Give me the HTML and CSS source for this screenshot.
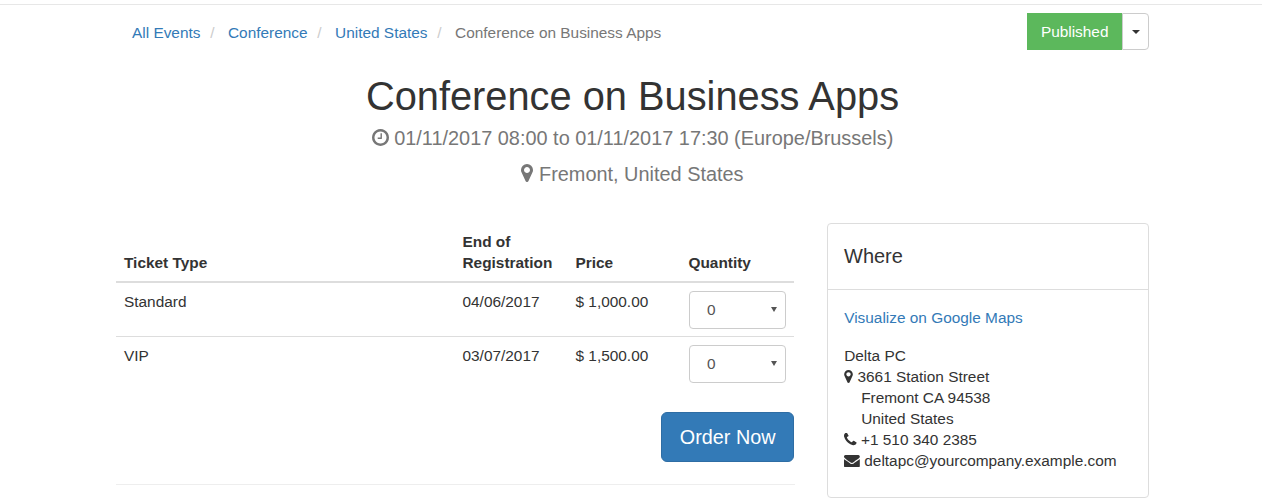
FILE: index.html
```html
<!DOCTYPE html>
<html lang="en">
<head>
<meta charset="utf-8">
<title>Conference on Business Apps</title>
<link rel="stylesheet" href="styles.css">
</head>
<body>
<div class="page">
  <div class="topbar">
    <ol class="crumbs">
      <li><a href="#">All Events</a></li>
      <li><a href="#">Conference</a></li>
      <li><a href="#">United States</a></li>
      <li class="current">Conference on Business Apps</li>
    </ol>
    <div class="btn-group">
      <span class="btn-published">Published</span>
      <span class="btn-caret"><i class="caret"></i></span>
    </div>
  </div>
  <header class="hero">
    <h1>Conference on Business Apps</h1>
    <p class="when"><svg class="ico ico-clock" viewBox="128 128 1536 1536"><path d="M1024 544v448q0 14-9 23t-23 9h-320q-14 0-23-9t-9-23v-64q0-14 9-23t23-9h224v-352q0-14 9-23t23-9h64q14 0 23 9t9 23zm416 352q0-148-73-273t-198-198-273-73-273 73-198 198-73 273 73 273 198 198 273 73 273-73 198-198 73-273zm224 0q0 209-103 385.5t-279.5 279.5-385.5 103-385.5-103-279.5-279.5-103-385.5 103-385.5 279.5-279.5 385.5-103 385.5 103 279.5 279.5 103 385.5z"/></svg> 01/11/2017 08:00 to 01/11/2017 17:30 (Europe/Brussels)</p>
    <p class="where"><svg class="ico ico-pin" viewBox="384 128 1024 1536"><path d="M1152 640q0-106-75-181t-181-75-181 75-75 181 75 181 181 75 181-75 75-181zm256 0q0 109-33 179l-364 774q-16 33-47.5 52t-67.5 19-67.5-19-46.5-52l-365-774q-33-70-33-179 0-212 150-362t362-150 362 150 150 362z"/></svg> Fremont, United States</p>
  </header>
  <div class="columns">
    <section class="tickets">
      <table class="ticket-table">
        <thead>
          <tr>
            <th class="col-type">Ticket Type</th>
            <th class="col-end">End of Registration</th>
            <th class="col-price">Price</th>
            <th class="col-qty">Quantity</th>
          </tr>
        </thead>
        <tbody>
          <tr>
            <td>Standard</td>
            <td>04/06/2017</td>
            <td>$ 1,000.00</td>
            <td><span class="qty-wrap"><select class="qty"><option>0</option><option>1</option></select></span></td>
          </tr>
          <tr>
            <td>VIP</td>
            <td>03/07/2017</td>
            <td>$ 1,500.00</td>
            <td><span class="qty-wrap"><select class="qty"><option>0</option><option>1</option></select></span></td>
          </tr>
        </tbody>
      </table>
      <div class="order-row"><span class="btn-order">Order Now</span></div>
      <hr class="rule">
    </section>
    <aside class="panel">
      <h2 class="panel-head">Where</h2>
      <div class="panel-body">
        <p class="map-link"><a href="#">Visualize on Google Maps</a></p>
        <address class="addr">
          <div>Delta PC</div>
          <div><svg class="ico ico-pin-sm" viewBox="384 128 1024 1536"><path d="M1152 640q0-106-75-181t-181-75-181 75-75 181 75 181 181 75 181-75 75-181zm256 0q0 109-33 179l-364 774q-16 33-47.5 52t-67.5 19-67.5-19-46.5-52l-365-774q-33-70-33-179 0-212 150-362t362-150 362 150 150 362z"/></svg> 3661 Station Street</div>
          <div class="indent">Fremont CA 94538</div>
          <div class="indent">United States</div>
          <div><svg class="ico ico-phone" viewBox="192 192 1408 1408"><path d="M1600 1240q0 27-10 70.5t-21 68.5q-21 50-122 106-94 51-186 51-27 0-53-3.5t-57.5-12.5-47-14.5-55.5-20.5-49-18q-98-35-175-83-127-79-264-216t-216-264q-48-77-83-175-3-9-18-49t-20.5-55.5-14.5-47-12.5-57.5-3.5-53q0-92 51-186 56-101 106-122 25-11 68.5-21t70.5-10q14 0 21 3 18 6 53 76 11 19 30 54t35 63.5 31 53.5q3 4 17.5 25t21.5 35.5 7 28.5q0 20-28.5 50t-62 55-62 53-28.5 46q0 9 5 22.5t8.5 20.5 14 24 11.5 19q76 137 174 235t235 174q2 1 19 11.5t24 14 20.5 8.5 22.5 5q18 0 46-28.5t53-62 55-62 50-28.5q14 0 28.5 7t35.5 21.5 25 17.5q25 15 53.5 31t63.5 35 54 30q70 35 76 53 3 7 3 21z"/></svg> +1 510 340 2385</div>
          <div><svg class="ico ico-mail" viewBox="0 256 1792 1408"><path d="M1792 710v794q0 66-47 113t-113 47h-1472q-66 0-113-47t-47-113v-794q44 49 101 87 362 246 497 345 57 42 92.5 65.5t94.5 48 110 24.5h2q51 0 110-24.5t94.5-48 92.5-65.5q170-123 498-345 57-39 100-87zm0-294q0 79-49 151t-122 123q-376 261-468 325-10 7-42.5 30.5t-54 38-52 32.5-57.5 27-50 9h-2q-23 0-50-9t-57.5-27-52-32.5-54-38-42.5-30.5q-91-64-262-182.5t-205-142.5q-62-42-117-115.5t-55-136.5q0-78 41.5-130t118.5-52h1472q65 0 112.5 47t47.5 113z"/></svg> deltapc@yourcompany.example.com</div>
        </address>
      </div>
    </aside>
  </div>
</div>
</body>
</html>
```

FILE: styles.css
```css
* { box-sizing: border-box; }
html, body { margin: 0; padding: 0; }
body {
  height: 504px;
  overflow: hidden;
  background: #fff;
  color: #333;
  font: 15.4px/21px "Liberation Sans", Arial, sans-serif;
}
a { color: #337ab7; text-decoration: none; }

.page {
  margin-top: 4px;
  padding: 0 113px 0 116px;
  border-top: 1px solid #e7e7e7;
}

.topbar {
  display: flex;
  justify-content: space-between;
  align-items: flex-start;
  padding-top: 8px;
}
.crumbs {
  display: flex;
  list-style: none;
  margin: 0;
  padding: 9px 16px;
}
.crumbs li + li::before {
  content: "/\00a0";
  padding: 0 9.2px 0 9.8px;
  color: #ccc;
}
.crumbs .current { color: #777; }

.btn-group { display: flex; height: 37px; }
.btn-published {
  background: #5cb85c;
  border: 1px solid #5cb85c;
  color: #fff;
  padding: 7px 12.5px 7px 12.5px;
}
.btn-caret {
  width: 27px;
  border: 1px solid #ccc;
  border-radius: 0 4px 4px 0;
  background: #fff;
  display: flex;
  align-items: center;
  justify-content: center;
}
.caret {
  width: 0;
  height: 0;
  border-top: 4px solid #333;
  border-left: 4px solid transparent;
  border-right: 4px solid transparent;
}

.hero { text-align: center; }
.hero h1 {
  margin: 18px 0 0;
  font-size: 39.8px;
  font-weight: 500;
  line-height: 52px;
  color: #333;
}
.hero p {
  margin: 0;
  font-size: 19.9px;
  color: #777;
  line-height: 28px;
}
.hero .when { margin-top: 2px; }
.hero .where { margin-top: 8px; }

.ico { fill: currentColor; display: inline-block; }
.ico-clock { width: 17px; height: 17px; vertical-align: -1px; }
.ico-pin { width: 12px; height: 18px; vertical-align: -1px; }
.ico-pin-sm { width: 9px; height: 13px; vertical-align: -1px; }
.ico-phone { width: 12.5px; height: 13px; vertical-align: -1px; }
.ico-mail { width: 15.8px; height: 12.5px; vertical-align: -1px; }

.columns {
  display: flex;
  gap: 33px;
  margin-top: 35px;
  align-items: flex-start;
}
.tickets { width: 678px; flex: none; padding-top: 7px; }
.ticket-table { width: 678px; border-collapse: collapse; table-layout: fixed; }
.ticket-table th {
  text-align: left;
  vertical-align: bottom;
  padding: 1px 8px 8px;
  font-weight: 700;
  border-bottom: 2px solid #ddd;
}
.col-type { width: 338.5px; }
.col-end { width: 113px; }
.col-price { width: 113px; }
.col-qty { width: 113.5px; }
.ticket-table td {
  vertical-align: top;
  padding: 8px 8px 7px;
  border-top: 1px solid #ddd;
}
.ticket-table tbody tr:first-child td { border-top: 0; }
.qty-wrap { display: block; position: relative; width: 97px; }
.qty-wrap::after {
  content: "";
  position: absolute;
  top: 16px;
  right: 9px;
  border-top: 5px solid #555;
  border-left: 3px solid transparent;
  border-right: 3px solid transparent;
  pointer-events: none;
}
.qty {
  display: block;
  width: 97px;
  height: 38px;
  padding: 5px 17.5px 7px;
  font: 15.4px "Liberation Sans", Arial, sans-serif;
  color: #555;
  background: #fff;
  border: 1px solid #ccc;
  border-radius: 4px;
  appearance: none;
  -webkit-appearance: none;
}
.order-row { display: flex; justify-content: flex-end; margin-top: 22px; }
.btn-order {
  background: #337ab7;
  border: 1px solid #2e6da4;
  color: #fff;
  font-size: 19.8px;
  line-height: 28px;
  padding: 10px 17.5px;
  border-radius: 6px;
}
.rule { border: 0; border-top: 1px solid #eee; margin: 22px 0 0; width: 679px; }

.panel {
  width: 322px;
  flex: none;
  height: 275px;
  border: 1px solid #ddd;
  border-radius: 4px;
}
.panel-head {
  margin: 0;
  padding: 16px;
  font-size: 20px;
  line-height: 33px;
  font-weight: 500;
  border-bottom: 1px solid #ddd;
}
.panel-body { padding: 17px 16.2px; }
.map-link { margin: 0 0 17px; }
.addr { font-style: normal; }
.indent { padding-left: 17px; }
```
